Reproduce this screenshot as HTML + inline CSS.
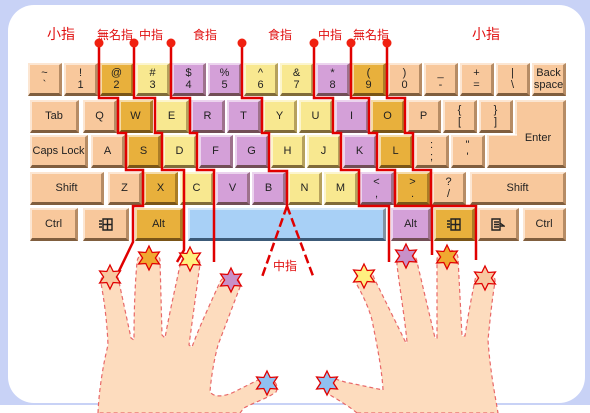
<!DOCTYPE html>
<html><head><meta charset="utf-8"><style>
*{margin:0;padding:0;box-sizing:border-box}
body{width:590px;height:413px;overflow:hidden;background:#fff;position:relative;font-family:"Liberation Sans","Noto Sans CJK TC",sans-serif}
#bg{position:absolute;left:0;top:0;width:590px;height:405px;background:#c8d2f6}
#panel{position:absolute;left:8px;top:5px;width:577px;height:398px;background:#fff;border-radius:26px}
.k{position:absolute;height:33px;width:34px;border-top:2px solid rgba(255,255,255,.55);border-left:2px solid rgba(255,255,255,.55);border-right:3px solid rgba(60,30,0,.35);border-bottom:3px solid rgba(50,25,0,.6);font-size:11px;color:#222;display:flex;align-items:center;justify-content:center;text-align:center;line-height:12px}
.p{background:#f8c89c}.g{background:#e8b03c}.y{background:#f8e890}.u{background:#d4a0d8}.b{background:#a8d0f6;border-bottom-color:#3c5a78}
.lb{position:absolute;color:#e01010;font-size:12px;top:26px;white-space:nowrap}
</style></head><body>
<div id="bg"></div><div id="panel"></div>
<div class="lb" style="left:47px;top:24px;font-size:14px">小指</div>
<div class="lb" style="left:97px">無名指</div>
<div class="lb" style="left:139px">中指</div>
<div class="lb" style="left:193px">食指</div>
<div class="lb" style="left:268px">食指</div>
<div class="lb" style="left:318px">中指</div>
<div class="lb" style="left:353px">無名指</div>
<div class="lb" style="left:472px;top:24px;font-size:14px">小指</div>

<!-- row1 -->
<div class="k p" style="left:28px;top:63px">~<br>`</div>
<div class="k p" style="left:64px;top:63px">!<br>1</div>
<div class="k g" style="left:100px;top:63px">@<br>2</div>
<div class="k y" style="left:136px;top:63px">#<br>3</div>
<div class="k u" style="left:172px;top:63px">$<br>4</div>
<div class="k u" style="left:208px;top:63px">%<br>5</div>
<div class="k y" style="left:244px;top:63px">^<br>6</div>
<div class="k y" style="left:280px;top:63px">&amp;<br>7</div>
<div class="k u" style="left:316px;top:63px">*<br>8</div>
<div class="k g" style="left:352px;top:63px">(<br>9</div>
<div class="k p" style="left:388px;top:63px">)<br>0</div>
<div class="k p" style="left:424px;top:63px">_<br>-</div>
<div class="k p" style="left:460px;top:63px">+<br>=</div>
<div class="k p" style="left:496px;top:63px">|<br>\</div>
<div class="k p" style="left:532px;top:63px">Back<br>space</div>
<!-- row2 -->
<div class="k p" style="left:30px;top:100px;width:49px">Tab</div>
<div class="k p" style="left:83px;top:100px">Q</div>
<div class="k g" style="left:119px;top:100px">W</div>
<div class="k y" style="left:155px;top:100px">E</div>
<div class="k u" style="left:191px;top:100px">R</div>
<div class="k u" style="left:227px;top:100px">T</div>
<div class="k y" style="left:263px;top:100px">Y</div>
<div class="k y" style="left:299px;top:100px">U</div>
<div class="k u" style="left:335px;top:100px">I</div>
<div class="k g" style="left:371px;top:100px">O</div>
<div class="k p" style="left:407px;top:100px">P</div>
<div class="k p" style="left:443px;top:100px">{<br>[</div>
<div class="k p" style="left:479px;top:100px">}<br>]</div>
<div class="k p" style="left:515px;top:100px;width:51px;height:40px;border-bottom:none"></div>
<div class="k p" style="left:487px;top:135px;width:79px;border-top:none"></div>
<div style="position:absolute;left:489px;top:134px;width:28px;height:2px;background:rgba(255,255,255,.55)"></div>
<div style="position:absolute;left:518px;top:132px;width:40px;font-size:11px;color:#222;text-align:center">Enter</div>
<!-- row3 -->
<div class="k p" style="left:30px;top:135px;width:58px">Caps Lock</div>
<div class="k p" style="left:91px;top:135px">A</div>
<div class="k g" style="left:127px;top:135px">S</div>
<div class="k y" style="left:163px;top:135px">D</div>
<div class="k u" style="left:199px;top:135px">F</div>
<div class="k u" style="left:235px;top:135px">G</div>
<div class="k y" style="left:271px;top:135px">H</div>
<div class="k y" style="left:307px;top:135px">J</div>
<div class="k u" style="left:343px;top:135px">K</div>
<div class="k g" style="left:379px;top:135px">L</div>
<div class="k p" style="left:415px;top:135px">:<br>;</div>
<div class="k p" style="left:451px;top:135px">"<br>'</div>
<!-- row4 -->
<div class="k p" style="left:30px;top:172px;width:74px">Shift</div>
<div class="k p" style="left:108px;top:172px">Z</div>
<div class="k g" style="left:144px;top:172px">X</div>
<div class="k y" style="left:180px;top:172px">C</div>
<div class="k u" style="left:216px;top:172px">V</div>
<div class="k u" style="left:252px;top:172px">B</div>
<div class="k y" style="left:288px;top:172px">N</div>
<div class="k y" style="left:324px;top:172px">M</div>
<div class="k u" style="left:360px;top:172px">&lt;<br>,</div>
<div class="k g" style="left:396px;top:172px">&gt;<br>.</div>
<div class="k p" style="left:432px;top:172px">?<br>/</div>
<div class="k p" style="left:470px;top:172px;width:96px">Shift</div>
<!-- row5 -->
<div class="k p" style="left:30px;top:208px;width:48px">Ctrl</div>
<div class="k p" style="left:83px;top:208px;width:46px"><svg width="14" height="13" viewBox="0 0 14 13"><path d="M4 1h9v11H4zM8.5 1v11M4 6.5h9M0 3h3M0 6h3M0 9h3" fill="none" stroke="#222" stroke-width="1.4"/></svg></div>
<div class="k g" style="left:135px;top:208px;width:48px">Alt</div>
<div class="k b" style="left:188px;top:208px;width:198px"></div>
<div class="k u" style="left:391px;top:208px;width:40px">Alt</div>
<div class="k g" style="left:434px;top:208px;width:41px"><svg width="14" height="13" viewBox="0 0 14 13"><path d="M4 1h9v11H4zM8.5 1v11M4 6.5h9M0 3h3M0 6h3M0 9h3" fill="none" stroke="#222" stroke-width="1.4"/></svg></div>
<div class="k p" style="left:478px;top:208px;width:41px"><svg width="14" height="13" viewBox="0 0 14 13"><path d="M1 1h8v11H1zM3 4h5M3 6.5h5M3 9h5M9 5l4 3-4 0" fill="none" stroke="#222" stroke-width="1.4"/></svg></div>
<div class="k p" style="left:523px;top:208px;width:43px">Ctrl</div>

<svg style="position:absolute;left:0;top:0" width="590" height="413" viewBox="0 0 590 413">
<g fill="#fddcbe" stroke="#e86868" stroke-width="1.2" stroke-dasharray="4,3">
<path d="M98,413 C99,390 103,365 108,345 C107,320 104,300 101,283 C99,272 118,268 119,282 L131,338 L134,340 C134,310 135,285 137,262 C138,250 158,248 160,260 L162,335 L165,338 C170,310 176,285 180,265 C182,252 200,252 200,264 L189,345 L192,347 C200,325 212,300 220,282 C225,272 242,276 240,287 L218,345 C214,360 211,378 210,392 C215,398 224,396 232,393 L262,378 C272,375 280,385 276,392 C268,398 255,402 244,408 L240,413 Z"/>
<path d="M357,413 C350,407 340,401 330,395 C318,390 320,378 332,378 L345,382 L383,390 C382,370 377,345 372,320 C368,305 361,292 356,283 C352,270 370,264 374,278 L406,343 L407,342 C405,320 400,290 397,265 C396,250 416,250 417,262 L435,338 L437,338 C437,310 437,285 437,260 C437,248 457,246 458,258 L462,336 L465,336 C468,315 472,295 475,280 C477,268 496,270 495,282 C492,300 490,320 488,340 C490,370 495,395 498,413 Z"/>
</g>
<g fill="none" stroke="#e00000" stroke-width="2.5">
<polyline points="99,43 99,98 118,98 118,133 126,133 126,170 143,170 143,206 133,206 133,242 118,273"/>
<polyline points="134,43 134,98 155,98 155,133 162,133 162,170 184,170 184,250 177,262"/>
<polyline points="171,43 171,98 190,98 190,133 197,133 197,170 214,170 214,262"/>
<polyline points="242,43 242,98 262,98 262,133 269,133 269,171 287,171 287,206"/>
<polyline points="314,43 314,98 333,98 333,133 341,133 341,170 359,170 359,206 389,206 389,262"/>
<polyline points="351,43 351,98 369,98 369,133 377,133 377,170 395,170 395,206 432,206 432,255"/>
<polyline points="387,43 387,98 405,98 405,133 413,133 413,170 431,170 431,206 476,206 476,260"/>
<path d="M287,206 L262,277 M287,206 L313,276" stroke-dasharray="9,4"/>
</g>
<g fill="#f02010">
<circle cx="99" cy="43" r="4.5"/><circle cx="134" cy="43" r="4.5"/><circle cx="171" cy="43" r="4.5"/><circle cx="242" cy="43" r="4.5"/><circle cx="314" cy="43" r="4.5"/><circle cx="351" cy="43" r="4.5"/><circle cx="387" cy="43" r="4.5"/>
</g>
<text x="273" y="270" font-size="12" fill="#e01010" font-family="Liberation Sans,Noto Sans CJK TC,sans-serif">中指</text>
<defs><path id="st" d="M0,-12 L3.2,-5.5 L10.4,-6 L6.4,0 L10.4,6 L3.2,5.5 L0,12 L-3.2,5.5 L-10.4,6 L-6.4,0 L-10.4,-6 L-3.2,-5.5 Z"/></defs>
<g stroke="#e00000" stroke-width="1.3">
<use href="#st" x="110" y="277" fill="#f8c8a0"/>
<use href="#st" x="149" y="258" fill="#f0a830"/>
<use href="#st" x="190" y="259" fill="#fff080"/>
<use href="#st" x="231" y="280" fill="#c890c8"/>
<use href="#st" x="267" y="383" fill="#90c0f0"/>
<use href="#st" x="364" y="276" fill="#fff080"/>
<use href="#st" x="406" y="256" fill="#c890c8"/>
<use href="#st" x="447" y="257" fill="#f0a830"/>
<use href="#st" x="485" y="278" fill="#f8c8a0"/>
<use href="#st" x="327" y="383" fill="#90c0f0"/>
</g>
</svg>
</body></html>
